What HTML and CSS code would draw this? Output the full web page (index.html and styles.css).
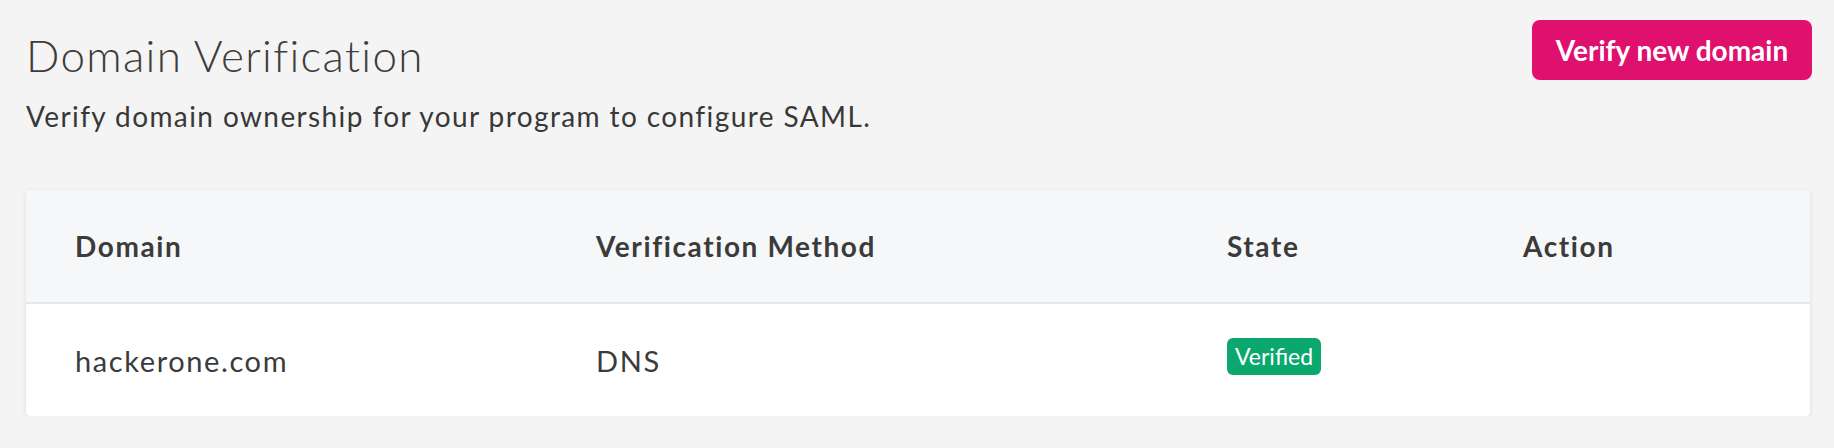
FILE: index.html
```html
<!DOCTYPE html>
<html lang="en">
<head>
<meta charset="utf-8">
<title>Domain Verification</title>
<link rel="stylesheet" href="styles.css">
</head>
<body>
<main class="page">
  <header class="page-header">
    <div class="heading">
      <h1 class="title">Domain Verification</h1>
      <p class="subtitle">Verify domain ownership for your program to configure SAML.</p>
    </div>
    <button class="btn-primary" type="button">Verify new domain</button>
  </header>
  <section class="card">
    <div class="row row-head">
      <div class="cell">Domain</div>
      <div class="cell">Verification Method</div>
      <div class="cell">State</div>
      <div class="cell">Action</div>
    </div>
    <div class="row row-body">
      <div class="cell">hackerone.com</div>
      <div class="cell">DNS</div>
      <div class="cell"><span class="badge">Verified</span></div>
      <div class="cell"></div>
    </div>
  </section>
</main>
</body>
</html>
```

FILE: styles.css
```css
* { box-sizing: border-box; }
html, body { margin: 0; padding: 0; }
body {
  background: #f4f4f4;
  font-family: "Lato", "Liberation Sans", sans-serif;
  color: #3b3b3b;
}
.page {
  padding: 20px 22px 0 26px;
}
.page-header {
  display: flex;
  justify-content: space-between;
  align-items: flex-start;
}
.heading {
  padding-top: 9px;
}
.title {
  margin: 0;
  font-size: 44px;
  line-height: 52px;
  font-weight: 300;
  letter-spacing: 1.3px;
  color: #3d3d3d;
}
.subtitle {
  margin: 17px 0 0;
  font-size: 28px;
  line-height: 36px;
  font-weight: 400;
  letter-spacing: 1.4px;
  color: #383838;
}
.btn-primary {
  width: 280px;
  height: 60px;
  border: none;
  border-radius: 8px;
  background: #e0106f;
  color: #ffffff;
  font-family: inherit;
  font-size: 28px;
  font-weight: 700;
  padding: 0;
  cursor: pointer;
}
.card {
  margin-top: 56px;
  width: 1784px;
  background: #ffffff;
  border-radius: 4px;
  box-shadow: 0 1px 5px rgba(0, 0, 0, 0.09), 0 2px 2px rgba(0, 0, 0, 0.04);
  overflow: hidden;
}
.row {
  display: grid;
  grid-template-columns: 521px 631px 296px 1fr;
  align-items: center;
  padding-left: 49px;
  height: 112px;
}
.row-head {
  background: #f6f7f9;
  border-bottom: 2px solid #e7e7ea;
  height: 114px;
  font-size: 28px;
  font-weight: 700;
  letter-spacing: 1.6px;
  color: #3b3b3b;
}
.row-body {
  font-size: 29px;
  letter-spacing: 1.6px;
  color: #3b3b3b;
}
.badge {
  display: inline-block;
  background: #0aa86f;
  color: #ffffff;
  font-size: 23px;
  line-height: 37px;
  height: 37px;
  padding: 0 8px;
  letter-spacing: 0;
  border-radius: 6px;
  position: relative;
  top: -5px;
}
```
